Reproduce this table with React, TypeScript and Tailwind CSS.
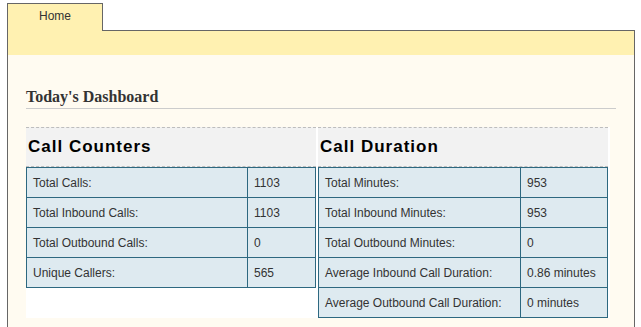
const counters = [
  ['Total Calls:', '1103'],
  ['Total Inbound Calls:', '1103'],
  ['Total Outbound Calls:', '0'],
  ['Unique Callers:', '565'],
]

const durations = [
  ['Total Minutes:', '953'],
  ['Total Inbound Minutes:', '953'],
  ['Total Outbound Minutes:', '0'],
  ['Average Inbound Call Duration:', '0.86 minutes'],
  ['Average Outbound Call Duration:', '0 minutes'],
]

function StatBox({
  title,
  rows,
  labelWidth,
}: {
  title: string
  rows: string[][]
  labelWidth: string
}) {
  return (
    <div className="w-[290px] bg-white">
      <div className="h-[40px] border-y border-dashed border-[#bdbdbd] bg-[#f2f2f2] flex items-center pl-[2px]">
        <h2 className="text-[17px] font-bold tracking-[1px] text-black">{title}</h2>
      </div>
      <div className="border-x border-t border-[#2d6880]">
        {rows.map(([label, value]) => (
          <div key={label} className="flex h-[30px] border-b border-[#2d6880] bg-[#deeaf0] text-[12px] text-[#333]">
            <div className={`${labelWidth} flex items-center pl-[6px]`}>{label}</div>
            <div className="flex-1 flex items-center pl-[6px] border-l border-[#2d6880]">{value}</div>
          </div>
        ))}
      </div>
    </div>
  )
}

export default function App() {
  return (
    <div className="min-h-[327px] bg-white pt-[3px] pl-[7px] font-['Liberation_Sans',Arial,sans-serif]">
      <div className="w-[628px]">
        <div className="flex h-[28px]">
          <div className="w-[96px] border-t border-x border-[#666] bg-[#fff1b1] text-center text-[12px] leading-[14px] text-[#333] pt-[5px]">
            Home
          </div>
          <div className="flex-1 border-b border-[#666]" />
        </div>
        <div className="border-x border-[#666] min-h-[300px] bg-[#fffbf1]">
          <div className="h-[24px] bg-[#fff1b1]" />
          <div className="px-[18px] pt-[33px]">
            <h1 className="font-['Liberation_Serif','Times_New_Roman',serif] text-[16px] leading-[18px] font-bold text-[#333] pb-[2px] border-b border-[#ccc]">
              Today's Dashboard
            </h1>
            <div className="mt-[18px] flex gap-[2px] w-[584px] pr-[2px] bg-white">
              <StatBox title="Call Counters" rows={counters} labelWidth="w-[220px]" />
              <StatBox title="Call Duration" rows={durations} labelWidth="w-[201px]" />
            </div>
          </div>
        </div>
      </div>
    </div>
  )
}
